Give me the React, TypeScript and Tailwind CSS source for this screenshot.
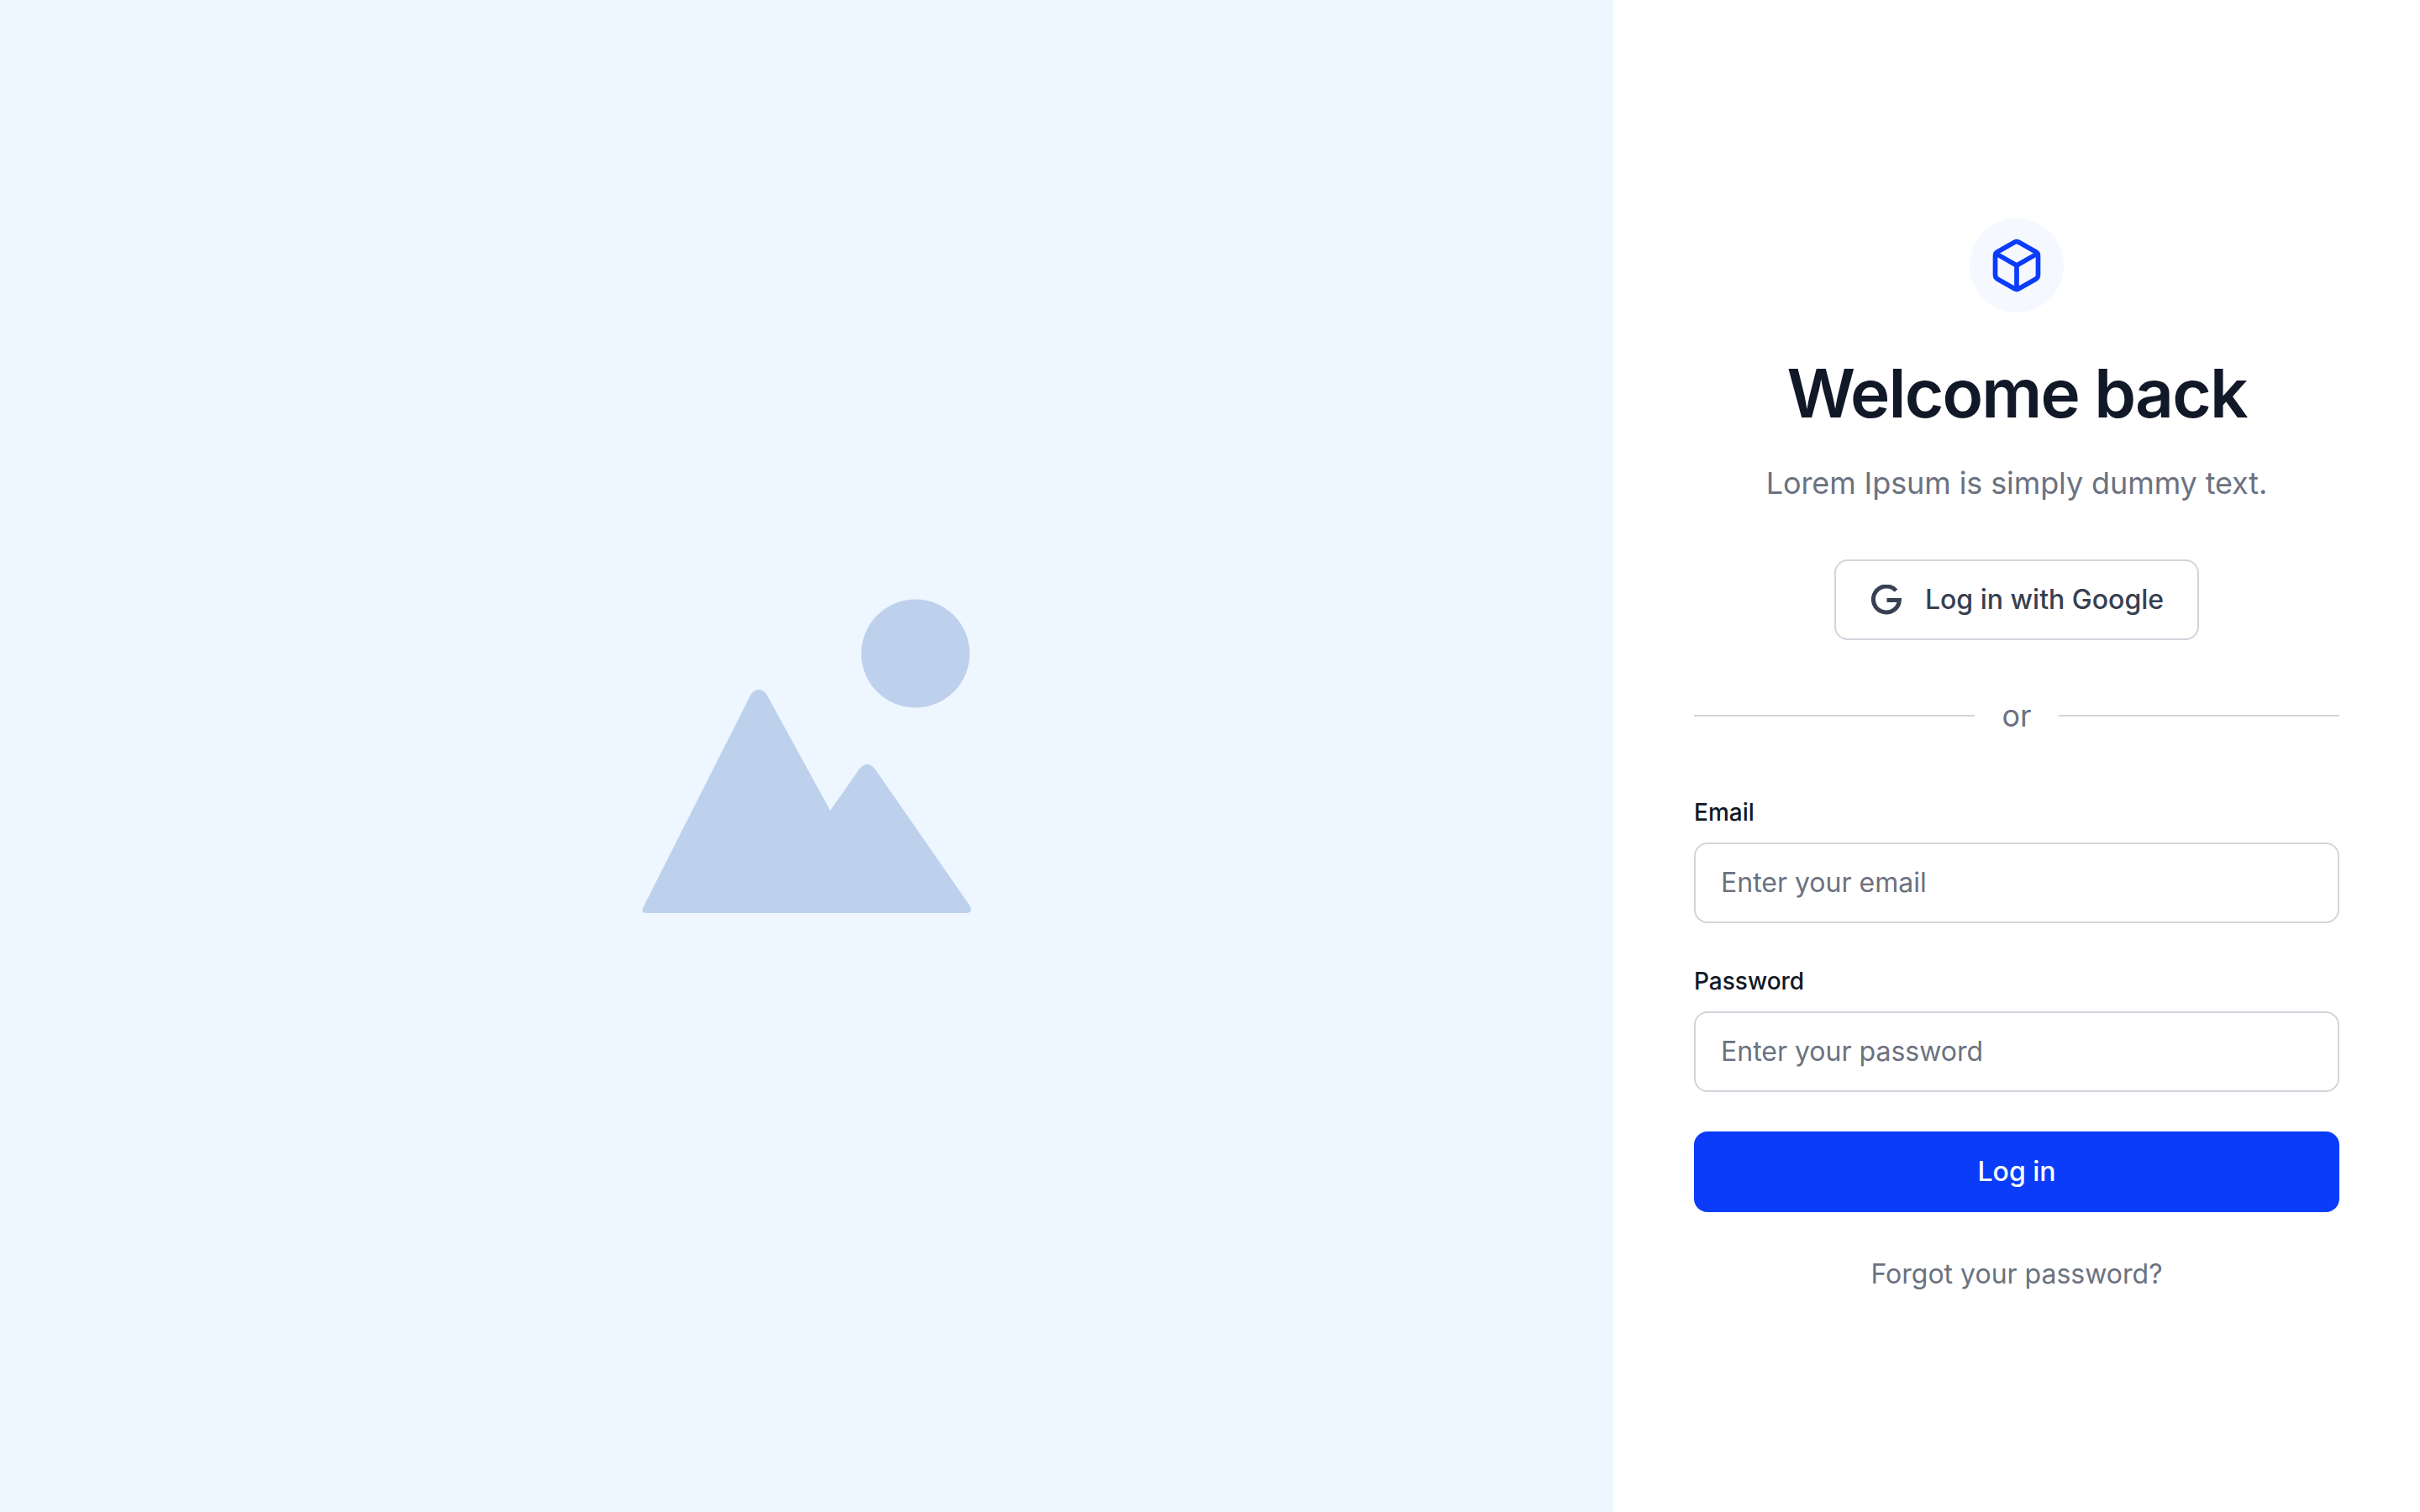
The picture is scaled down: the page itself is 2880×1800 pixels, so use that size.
import { Box } from "lucide-react";

function GoogleMark() {
  return (
    <svg width="36" height="36" viewBox="0 0 36 36" fill="none" stroke="#374151" strokeWidth="5">
      <path d="M29.5 7.2A15.5 15.5 0 1 0 33.4 18.5H18.5" />
    </svg>
  );
}

function Placeholder() {
  return (
    <svg width="392" height="376" viewBox="0 0 392 376" fill="#bdd1ec">
      <circle cx="325.5" cy="66" r="64.5" />
      <path d="M2 367 130 114Q139 104 148 114L224 253 259 203Q268 193 277 203L390 366Q395 375 385 375H7Q-3 375 2 367Z" />
    </svg>
  );
}

function Field({ label, placeholder, type }: { label: string; placeholder: string; type: string }) {
  return (
    <label className="block">
      <span className="block h-[40px] text-[28px] leading-[40px] font-medium text-[#111827]">{label}</span>
      <input
        type={type}
        placeholder={placeholder}
        className="mt-4 block h-[96px] w-full rounded-2xl border-2 border-[#d1d5db] bg-white px-[30px] text-[32px] text-[#111827] outline-none placeholder:text-[#6b7280]"
      />
    </label>
  );
}

export default function App() {
  return (
    <div className="flex h-[1800px] w-[2880px] font-['Inter',sans-serif]">
      <div className="flex w-[1920px] items-center justify-center bg-[#eef6ff]">
        <Placeholder />
      </div>
      <div className="flex w-[960px] flex-col items-center justify-center bg-white px-24">
        <div className="flex h-[112px] w-[112px] items-center justify-center rounded-full bg-[#f5f8ff]">
          <Box size={68} strokeWidth={2} color="#0a3cfa" />
        </div>
        <h1 className="mt-[48px] text-[80px] leading-[96px] font-semibold tracking-[-1.85px] text-[#111827]">Welcome back</h1>
        <p className="mt-[35px] text-[36px] leading-[48px] tracking-[-0.1px] text-[#6b7280]">Lorem Ipsum is simply dummy text.</p>
        <button className="mt-[67px] flex h-[96px] items-center gap-[28px] rounded-2xl border-2 border-[#d1d5db] bg-white pr-[40px] pl-[42px] text-[32px] font-medium text-[#374151]">
          <GoogleMark />
          Log in with Google
        </button>
        <div className="mt-[66px] flex w-full items-center gap-[32px] text-[36px] leading-[48px] text-[#6b7280]">
          <div className="h-[2px] flex-1 bg-[#d1d5db]" />
          or
          <div className="h-[2px] flex-1 bg-[#d1d5db]" />
        </div>
        <div className="mt-[71px] flex w-full flex-col gap-[49px]">
          <Field label="Email" placeholder="Enter your email" type="email" />
          <Field label="Password" placeholder="Enter your password" type="password" />
        </div>
        <button className="mt-[47px] h-[96px] w-full rounded-2xl bg-[#0a3cfa] text-[32px] font-medium text-white">Log in</button>
        <a className="mt-[50px] text-[32px] leading-[48px] text-[#6b7280]">Forgot your password?</a>
      </div>
    </div>
  );
}
